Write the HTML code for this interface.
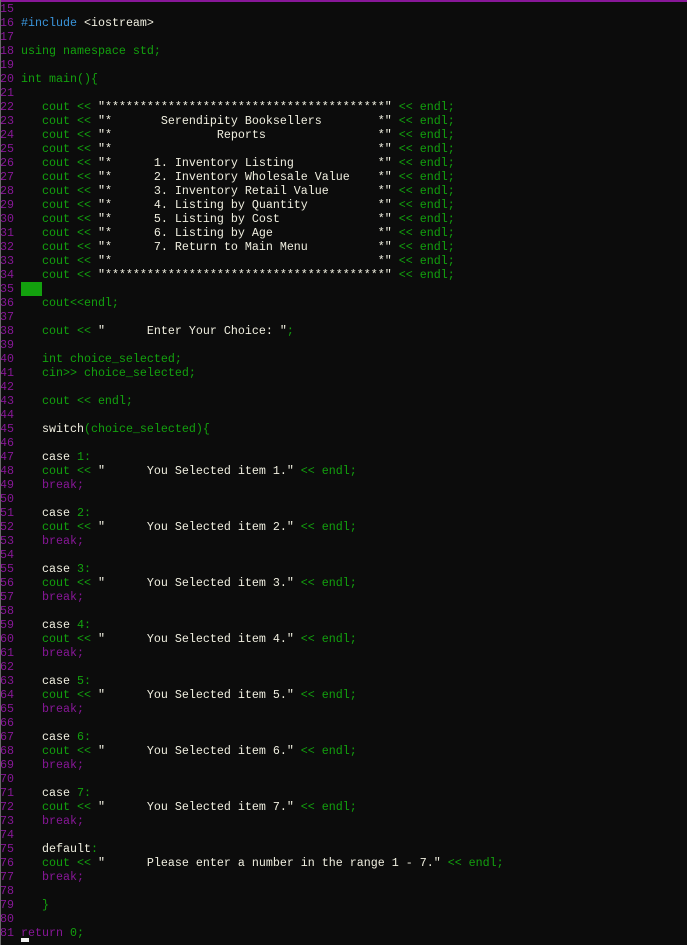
<!DOCTYPE html>
<html><head><meta charset="utf-8"><style>
html,body{margin:0;padding:0;background:#0c0c0c;width:687px;height:945px;overflow:hidden}
#top{position:absolute;left:0;top:0;width:687px;height:2px;background:#881798}
#lb{position:absolute;left:0;top:0;width:1px;height:945px;background:#6a6a6a}
pre{margin:0;position:absolute;left:0;top:2px;font-family:"Liberation Mono",monospace;font-size:11.67px;line-height:14px;color:#13a10e;white-space:pre}
.n{color:#881798}.s{color:#f0efe0}.c{color:#3a96dd}.k{color:#f0efe0}.p{color:#881798}
.blk{background:#13a10e}
#cur{position:absolute;left:21px;top:938px;width:8px;height:4px;background:#f2f2f2}
</style></head><body>
<pre><span class="n">15</span>
<span class="n">16</span> <span class="c">#include</span> <span class="s">&lt;iostream&gt;</span>
<span class="n">17</span>
<span class="n">18</span> using namespace std;
<span class="n">19</span>
<span class="n">20</span> int main(){
<span class="n">21</span>
<span class="n">22</span>    cout &lt;&lt; <span class="s">"****************************************"</span> &lt;&lt; endl;
<span class="n">23</span>    cout &lt;&lt; <span class="s">"*       Serendipity Booksellers        *"</span> &lt;&lt; endl;
<span class="n">24</span>    cout &lt;&lt; <span class="s">"*               Reports                *"</span> &lt;&lt; endl;
<span class="n">25</span>    cout &lt;&lt; <span class="s">"*                                      *"</span> &lt;&lt; endl;
<span class="n">26</span>    cout &lt;&lt; <span class="s">"*      1. Inventory Listing            *"</span> &lt;&lt; endl;
<span class="n">27</span>    cout &lt;&lt; <span class="s">"*      2. Inventory Wholesale Value    *"</span> &lt;&lt; endl;
<span class="n">28</span>    cout &lt;&lt; <span class="s">"*      3. Inventory Retail Value       *"</span> &lt;&lt; endl;
<span class="n">29</span>    cout &lt;&lt; <span class="s">"*      4. Listing by Quantity          *"</span> &lt;&lt; endl;
<span class="n">30</span>    cout &lt;&lt; <span class="s">"*      5. Listing by Cost              *"</span> &lt;&lt; endl;
<span class="n">31</span>    cout &lt;&lt; <span class="s">"*      6. Listing by Age               *"</span> &lt;&lt; endl;
<span class="n">32</span>    cout &lt;&lt; <span class="s">"*      7. Return to Main Menu          *"</span> &lt;&lt; endl;
<span class="n">33</span>    cout &lt;&lt; <span class="s">"*                                      *"</span> &lt;&lt; endl;
<span class="n">34</span>    cout &lt;&lt; <span class="s">"****************************************"</span> &lt;&lt; endl;
<span class="n">35</span> <span class="blk">   </span>
<span class="n">36</span>    cout&lt;&lt;endl;
<span class="n">37</span>
<span class="n">38</span>    cout &lt;&lt; <span class="s">"      Enter Your Choice: "</span>;
<span class="n">39</span>
<span class="n">40</span>    int choice_selected;
<span class="n">41</span>    cin&gt;&gt; choice_selected;
<span class="n">42</span>
<span class="n">43</span>    cout &lt;&lt; endl;
<span class="n">44</span>
<span class="n">45</span>    <span class="k">switch</span>(choice_selected){
<span class="n">46</span>
<span class="n">47</span>    <span class="k">case</span> 1:
<span class="n">48</span>    cout &lt;&lt; <span class="s">"      You Selected item 1."</span> &lt;&lt; endl;
<span class="n">49</span>    <span class="p">break;</span>
<span class="n">50</span>
<span class="n">51</span>    <span class="k">case</span> 2:
<span class="n">52</span>    cout &lt;&lt; <span class="s">"      You Selected item 2."</span> &lt;&lt; endl;
<span class="n">53</span>    <span class="p">break;</span>
<span class="n">54</span>
<span class="n">55</span>    <span class="k">case</span> 3:
<span class="n">56</span>    cout &lt;&lt; <span class="s">"      You Selected item 3."</span> &lt;&lt; endl;
<span class="n">57</span>    <span class="p">break;</span>
<span class="n">58</span>
<span class="n">59</span>    <span class="k">case</span> 4:
<span class="n">60</span>    cout &lt;&lt; <span class="s">"      You Selected item 4."</span> &lt;&lt; endl;
<span class="n">61</span>    <span class="p">break;</span>
<span class="n">62</span>
<span class="n">63</span>    <span class="k">case</span> 5:
<span class="n">64</span>    cout &lt;&lt; <span class="s">"      You Selected item 5."</span> &lt;&lt; endl;
<span class="n">65</span>    <span class="p">break;</span>
<span class="n">66</span>
<span class="n">67</span>    <span class="k">case</span> 6:
<span class="n">68</span>    cout &lt;&lt; <span class="s">"      You Selected item 6."</span> &lt;&lt; endl;
<span class="n">69</span>    <span class="p">break;</span>
<span class="n">70</span>
<span class="n">71</span>    <span class="k">case</span> 7:
<span class="n">72</span>    cout &lt;&lt; <span class="s">"      You Selected item 7."</span> &lt;&lt; endl;
<span class="n">73</span>    <span class="p">break;</span>
<span class="n">74</span>
<span class="n">75</span>    <span class="k">default</span>:
<span class="n">76</span>    cout &lt;&lt; <span class="s">"      Please enter a number in the range 1 - 7."</span> &lt;&lt; endl;
<span class="n">77</span>    <span class="p">break;</span>
<span class="n">78</span>
<span class="n">79</span>    }
<span class="n">80</span>
<span class="n">81</span> <span class="p">return</span> 0;</pre>
<div id="top"></div><div id="lb"></div><div id="cur"></div>
</body></html>
